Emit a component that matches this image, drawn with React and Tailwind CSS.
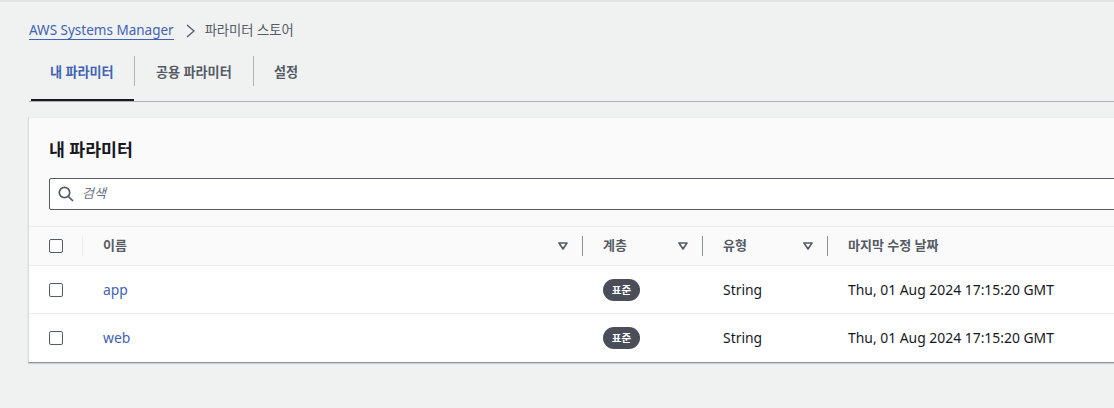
import React from 'react';

const fontStack = { fontFamily: '"Noto Sans", "Noto Sans CJK KR", sans-serif' };

const rows = [
    { name: 'app', tier: '표준', type: 'String', date: 'Thu, 01 Aug 2024 17:15:20 GMT' },
    { name: 'web', tier: '표준', type: 'String', date: 'Thu, 01 Aug 2024 17:15:20 GMT' },
];

const Checkbox = () => (
    <span className="block w-[14px] h-[14px] bg-white border border-[#545b64] rounded-[2px]" />
);

const SortIcon = () => (
    <svg width="10" height="8" viewBox="0 0 10 8" className="shrink-0">
        <path d="M1 1h8L5 7z" fill="none" stroke="#545b64" strokeWidth="1.6" strokeLinejoin="round" />
    </svg>
);

const HeaderCell = ({ label, divider = true }) => (
    <div className="relative flex items-center h-full pl-5 text-[13px] font-bold text-[#545b64]">
        <span>{label}</span>
        {divider && (
            <span className="absolute right-[15px] flex items-center">
                <SortIcon />
            </span>
        )}
        {divider && <span className="absolute right-0 top-[9px] w-px h-5 bg-[#879596]" />}
    </div>
);

const Row = ({ row, last }) => (
    <div className={`grid grid-cols-[54px_500px_120px_125px_1fr] items-center h-12 bg-white text-[13.9px] ${last ? '' : 'pt-[1px] border-b border-[#eaeded]'}`}>
        <div className="pl-5"><Checkbox /></div>
        <div className="pl-5 text-[#3f62b5]">{row.name}</div>
        <div className="pl-5">
            <span className="inline-flex items-center justify-center w-[37px] h-[22px] rounded-full bg-[#4a4e59] text-white text-[10.5px] font-bold">{row.tier}</span>
        </div>
        <div className="pl-5 text-[#16191f]">{row.type}</div>
        <div className="pl-5 text-[#16191f] whitespace-nowrap">{row.date}</div>
    </div>
);

export default function App() {
    return (
        <div className="w-[1114px] h-[408px] overflow-hidden bg-[#f0f2f2] border-t-2 border-[#e4e6e6]" style={fontStack}>
            <nav className="flex items-center h-[20px] mt-[19px] pl-[29px] text-[13.5px]">
                <a className="text-[#3f62b5] border-b border-[#3f62b5] leading-[17px]">AWS Systems Manager</a>
                <svg width="12" height="14" viewBox="0 0 12 14" className="ml-[11px] mr-[8px]">
                    <path d="M2 1l7 6-7 6" fill="none" stroke="#545b64" strokeWidth="1.3" />
                </svg>
                <span className="text-[#545b64] text-[13.3px]">파라미터 스토어</span>
            </nav>

            <div className="flex ml-[29px] mt-[15px] h-[46px] border-b border-[#aab7b8] text-[13.1px] font-bold text-[#545b64]">
                <div className="relative pt-[1px] w-[105px] h-[46px] pl-[21px] leading-[30px] text-[#3f62b5] after:absolute after:left-[2px] after:right-0 after:bottom-[1px] after:h-[2px] after:bg-[#16191f]">
                    내 파라미터
                </div>
                <div className="h-[30px] w-px bg-[#aab7b8]" />
                <div className="pl-[21px] w-[118px] pt-[1px] leading-[30px]">공용 파라미터</div>
                <div className="h-[30px] w-px bg-[#aab7b8]" />
                <div className="pl-[20px] pt-[1px] leading-[30px]">설정</div>
            </div>

            <section className="ml-[28px] mr-[-20px] mt-[15px] border-l border-[#d5dbdb] border-b border-b-[#8f9595] shadow-[0_1px_1px_rgba(0,28,36,0.15)]">
                <div className="bg-[#fafafa] border-t border-[#eaeded] pt-[20px] h-[109px]">
                    <h2 className="pl-5 text-[17.25px] leading-[24px] font-bold text-[#16191f]">내 파라미터</h2>
                    <div className="relative mt-[16px] ml-5 h-[32px] bg-white border border-[#545b64] rounded-[2px] flex items-center">
                        <svg width="16" height="16" viewBox="0 0 16 16" className="ml-2">
                            <circle cx="6.5" cy="6.5" r="5.2" fill="none" stroke="#545b64" strokeWidth="1.7" />
                            <path d="M10.3 10.3L15 15" stroke="#545b64" strokeWidth="1.7" />
                        </svg>
                        <span className="ml-[8px] text-[13px] italic text-[#687078]">검색</span>
                    </div>
                </div>
                <div className="grid grid-cols-[54px_500px_120px_125px_1fr] items-center h-[40px] bg-[#fafafa] border-t border-b border-[#eaeded]">
                    <div className="relative pl-5 h-full flex items-center">
                        <Checkbox />
                        <span className="absolute right-0 top-[9px] w-px h-5 bg-[#eaeded]" />
                    </div>
                    <HeaderCell label="이름" />
                    <HeaderCell label="계층" />
                    <HeaderCell label="유형" />
                    <HeaderCell label="마지막 수정 날짜" divider={false} />
                </div>
                {rows.map((row, i) => (
                    <Row key={row.name} row={row} last={i === rows.length - 1} />
                ))}
            </section>
        </div>
    );
}
